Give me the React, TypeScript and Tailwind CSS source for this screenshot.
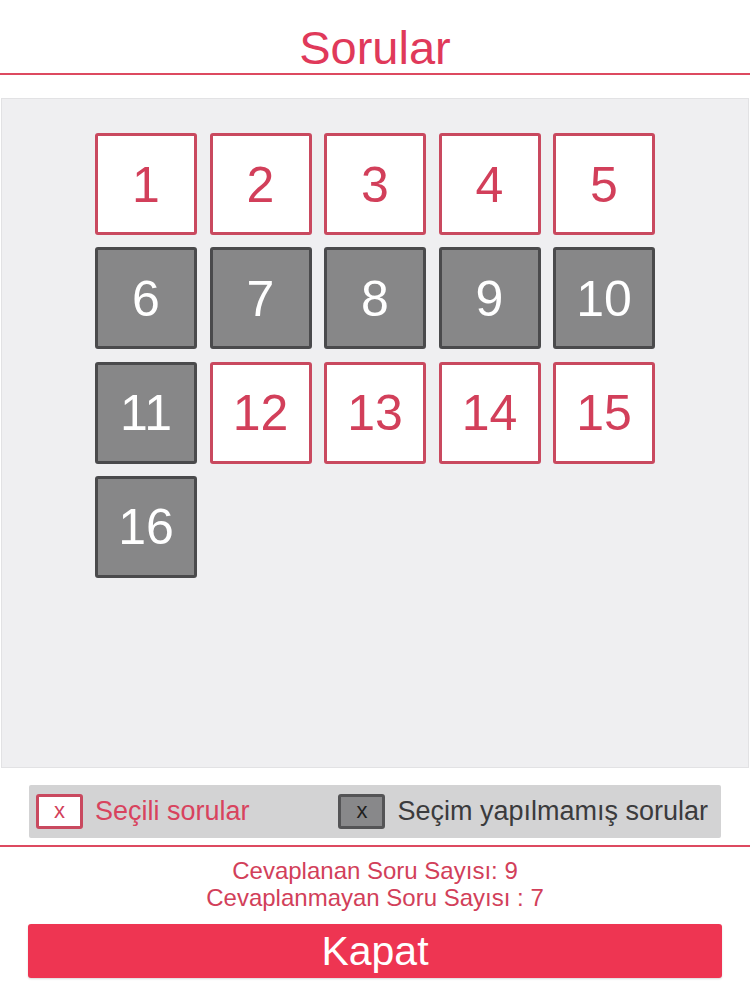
const font = { fontFamily: '"Liberation Sans", Arial, sans-serif' };

const answered = [1, 2, 3, 4, 5, 12, 13, 14, 15];
const questions = Array.from({ length: 16 }, (_, i) => i + 1);

const Tile = ({ n }: { n: number }) => {
  const on = answered.includes(n);
  return (
    <div
      className={
        on
          ? "w-[102px] h-[102px] flex items-center justify-center rounded-[3px] border-[3px] border-[#c9495f] bg-white text-[#d23f5a] text-[50px] pt-[2px]"
          : "w-[102px] h-[102px] flex items-center justify-center rounded-[3px] border-[3px] border-[#4a4a4c] bg-[#878788] text-white text-[50px] pt-[2px]"
      }
    >
      {n}
    </div>
  );
};

export default function App() {
  return (
    <div className="w-[750px] h-[1000px] bg-white flex flex-col" style={font}>
      <div className="h-[73px] flex items-start justify-center pt-[20px]">
        <h1 className="text-[47px] leading-[56px] text-[#e0395a]">Sorular</h1>
      </div>
      <div className="h-[2px] bg-[#dd4a60]" />

      <div className="mt-[23px] mx-[1px] h-[670px] bg-[#efeff1] border border-[#e2e2e4] pt-[34px] flex justify-center">
        <div className="grid grid-cols-[repeat(5,102px)] gap-x-[12.5px] gap-y-[12.3px] content-start">
          {questions.map((n) => (
            <Tile key={n} n={n} />
          ))}
        </div>
      </div>

      <div className="mt-[17px] mx-[29px] h-[53px] bg-[#d3d3d4] rounded-[2px] flex items-center pl-[7px] pr-[13px]">
        <div className="w-[47px] h-[35px] rounded-[3px] border-[3px] border-[#c9495f] bg-white flex items-center justify-center text-[22px] text-[#d23f5a] pb-[2px]">
          x
        </div>
        <span className="ml-[12px] text-[27px] text-[#d8435e]">Seçili sorular</span>
        <div className="ml-auto w-[47px] h-[35px] rounded-[3px] border-[3px] border-[#545456] bg-[#88888a] flex items-center justify-center text-[22px] text-[#1e1e1e] pb-[2px]">
          x
        </div>
        <span className="ml-[12px] text-[27px] text-[#3b3b3d]">Seçim yapılmamış sorular</span>
      </div>

      <div className="mt-[7px] h-[2px] bg-[#dd4a60]" />

      <div className="mt-[10px] flex flex-col items-center text-[24px] leading-[27px] text-[#d23f5a]">
        <div>Cevaplanan Soru Sayısı: 9</div>
        <div>Cevaplanmayan Soru Sayısı : 7</div>
      </div>

      <button className="mt-[13px] mx-[28px] h-[54px] rounded-[3px] bg-[#ee3552] text-white text-[41px] leading-[54px] flex items-center justify-center shadow-[0_1px_2px_rgba(0,0,0,0.15)]">
        Kapat
      </button>
    </div>
  );
}
